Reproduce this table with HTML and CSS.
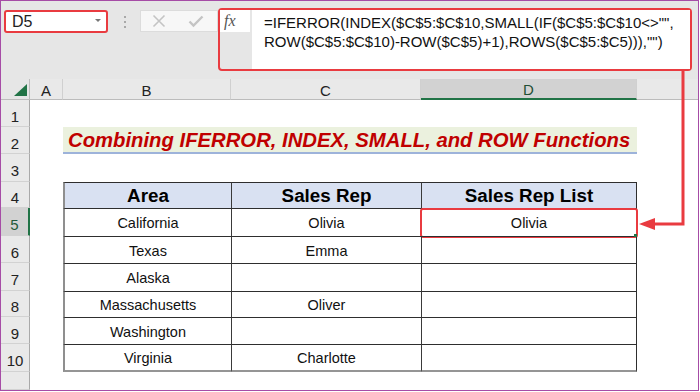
FILE: index.html
```html
<!DOCTYPE html>
<html>
<head>
<meta charset="utf-8">
<link rel="stylesheet" href="styles.css">
</head>
<body>
<div class="frame">
  <div class="toolbar">
    <div class="namebox"><span class="ref">D5</span><span class="caret"></span></div>
    <div class="grip"><i></i><i></i><i></i></div>
    <div class="btns">
      <svg class="ico" width="14" height="14" viewBox="0 0 14 14"><path d="M1.5 1.5 L12.5 12.5 M12.5 1.5 L1.5 12.5" stroke="#c4c4c4" stroke-width="1.6" fill="none"/></svg>
      <svg class="ico" width="16" height="14" viewBox="0 0 16 14"><path d="M1.5 7.5 L5.5 11.5 L14.5 2.5" stroke="#c4c4c4" stroke-width="2.4" fill="none"/></svg>
    </div>
    <div class="fgroup">
      <div class="fxcol"><div class="fx">fx</div></div>
      <div class="formula">=IFERROR(INDEX($C$5:$C$10,SMALL(IF($C$5:$C$10&lt;&gt;"",<br>ROW($C$5:$C$10)-ROW($C$5)+1),ROWS($C$5:$C5))),"")</div>
    </div>
  </div>
  <div class="sheet">
    <div class="corner"><span class="tri"></span></div>
    <div class="ch">A</div><div class="ch">B</div><div class="ch">C</div><div class="ch sel">D</div><div class="ch end"></div>

    <div class="rh">1</div><div class="c"></div><div class="c"></div><div class="c"></div><div class="c"></div><div class="c"></div>

    <div class="rh">2</div><div class="c"></div><div class="title">Combining IFERROR, INDEX, SMALL, and ROW Functions</div><div class="c"></div>

    <div class="rh">3</div><div class="c"></div><div class="c"></div><div class="c"></div><div class="c"></div><div class="c"></div>

    <div class="rh">4</div><div class="c"></div><div class="t th first">Area</div><div class="t th">Sales Rep</div><div class="t th last">Sales Rep List</div><div class="c"></div>

    <div class="rh sel">5</div><div class="c"></div><div class="t first">California</div><div class="t">Olivia</div><div class="t last active">Olivia</div><div class="c"></div>

    <div class="rh">6</div><div class="c"></div><div class="t first">Texas</div><div class="t">Emma</div><div class="t last"></div><div class="c"></div>

    <div class="rh">7</div><div class="c"></div><div class="t first">Alaska</div><div class="t"></div><div class="t last"></div><div class="c"></div>

    <div class="rh">8</div><div class="c"></div><div class="t first">Massachusetts</div><div class="t">Oliver</div><div class="t last"></div><div class="c"></div>

    <div class="rh">9</div><div class="c"></div><div class="t first">Washington</div><div class="t"></div><div class="t last"></div><div class="c"></div>

    <div class="rh">10</div><div class="c"></div><div class="t first bot">Virginia</div><div class="t bot">Charlotte</div><div class="t last bot"></div><div class="c"></div>

    <div class="rh"></div><div class="c"></div><div class="c"></div><div class="c"></div><div class="c"></div><div class="c"></div>
  </div>
  <svg class="connector" width="697" height="389" viewBox="0 0 697 389">
    <path d="M682 69 L682 223 L652 223" stroke="#e93b40" stroke-width="3" fill="none"/>
    <polygon points="638,223 654,217 654,229" fill="#e93b40"/>
  </svg>
</div>
</body>
</html>
```

FILE: styles.css
```css
html, body {
  margin: 0;
  padding: 0;
  background: #ffffff;
}

.frame {
  position: relative;
  width: 699px;
  height: 391px;
  box-sizing: border-box;
  border: 1px solid #a64ca6;
  background: #e6e6e6;
  font-family: "Liberation Sans", Arial, sans-serif;
  color: #000;
  overflow: hidden;
}

/* ---------- formula bar ---------- */
.toolbar {
  height: 78px;
  display: flex;
  align-items: flex-start;
  padding-left: 3px;
  box-sizing: border-box;
}

.namebox {
  margin-top: 9px;
  width: 104px;
  height: 23px;
  box-sizing: border-box;
  border: 2px solid #e93b40;
  border-radius: 3px;
  background: #fff;
  display: flex;
  align-items: center;
  justify-content: space-between;
  padding: 0 5px 0 6px;
}

.ref {
  font-size: 16px;
  color: #222;
}

.caret {
  width: 0;
  height: 0;
  border-left: 3px solid transparent;
  border-right: 3px solid transparent;
  border-top: 3px solid #777;
  margin-top: -2px;
}

.grip {
  margin-top: 15px;
  margin-left: 16px;
  width: 3px;
  display: flex;
  flex-direction: column;
  gap: 3px;
}

.grip i {
  display: block;
  width: 2px;
  height: 2px;
  background: #a8a8a8;
}

.btns {
  margin-top: 9px;
  margin-left: 13px;
  width: 78px;
  height: 22px;
  box-sizing: border-box;
  background: #f7f7f7;
  border: 1px solid #dcdcdc;
  display: flex;
  align-items: center;
  padding-left: 11px;
  gap: 22px;
}

.fgroup {
  margin-top: 7px;
  width: 474px;
  height: 63px;
  box-sizing: border-box;
  border: 2px solid #e93b40;
  border-radius: 4px;
  display: flex;
  background: #e6e6e6;
}

.fxcol {
  width: 32px;
}

.fx {
  width: 30px;
  height: 22px;
  background: #fff;
  font-family: "Liberation Serif", "Times New Roman", serif;
  font-style: italic;
  font-size: 16px;
  color: #555;
  padding-left: 4px;
  box-sizing: border-box;
  line-height: 22px;
}

.formula {
  flex: 1;
  background: #fff;
  padding: 3px 0 0 12px;
  font-size: 15px;
  line-height: 19px;
  color: #111;
  white-space: nowrap;
}

/* ---------- sheet grid ---------- */
.sheet {
  display: grid;
  grid-template-columns: 29px 33px 168px 190px 216px 1fr;
  grid-template-rows: 21px 27px 27px 28px 26px 28px 27px 28px 26px 27px 28px 1fr;
  height: 311px;
  background: #fff;
}

.corner {
  position: relative;
  background: #e6e6e6;
  border-right: 1px solid #bcbcbc;
  border-bottom: 1px solid #bcbcbc;
}

.tri {
  position: absolute;
  right: 2px;
  bottom: 3px;
  width: 0;
  height: 0;
  border-left: 13px solid transparent;
  border-bottom: 12px solid #217346;
}

.ch {
  background: #e9e9e9;
  border-right: 1px solid #d0d0d0;
  border-bottom: 1px solid #bcbcbc;
  font-size: 15px;
  color: #222;
  display: flex;
  align-items: center;
  justify-content: center;
  padding-top: 2px;
  box-sizing: border-box;
}

.ch.sel {
  background: #d2d2d2;
  border-bottom: 2px solid #217346;
  color: #1f4f35;
}

.ch.end {
  border-right: none;
}

.rh {
  background: #e9e9e9;
  border-right: 1px solid #a9a9a9;
  border-bottom: 1px solid #d2d2d2;
  font-size: 15px;
  color: #222;
  display: flex;
  align-items: center;
  justify-content: center;
  padding-top: 6px;
  box-sizing: border-box;
}

.rh.sel {
  background: #d2d2d2;
  border-right: 2px solid #217346;
  color: #1f5a3a;
}

.c {
  background: #fff;
}

.title {
  grid-column: span 3;
  background: #ebf1de;
  border-bottom: 2px solid #9db3da;
  color: #c00000;
  font-weight: bold;
  font-style: italic;
  font-size: 20.3px;
  display: flex;
  align-items: center;
  padding-left: 5px;
  padding-top: 1px;
  box-sizing: border-box;
  white-space: nowrap;
}

.t {
  border-top: 1px solid #2e2e2e;
  border-left: 1px solid #3a3a3a;
  font-size: 14.5px;
  color: #111;
  display: flex;
  align-items: center;
  justify-content: center;
  box-sizing: border-box;
  padding-top: 1px;
  position: relative;
}

.t.first {
  border-left: 2px solid #8f8f8f;
}

.t.last {
  border-right: 1px solid #2e2e2e;
}

.t.bot {
  border-bottom: 2px solid #959595;
}

.th {
  background: #d9e1f2;
  font-weight: bold;
  font-size: 18.8px;
  color: #000;
}

.active::after {
  content: "";
  position: absolute;
  left: -2px;
  right: -2px;
  top: -1px;
  bottom: -2px;
  border: 2px solid #e93b40;
  border-radius: 3px;
}

.active::before {
  content: "";
  position: absolute;
  right: -1px;
  bottom: -1px;
  width: 3px;
  height: 3px;
  background: #217346;
  z-index: 2;
}

.connector {
  position: absolute;
  left: 0;
  top: 0;
}
```
